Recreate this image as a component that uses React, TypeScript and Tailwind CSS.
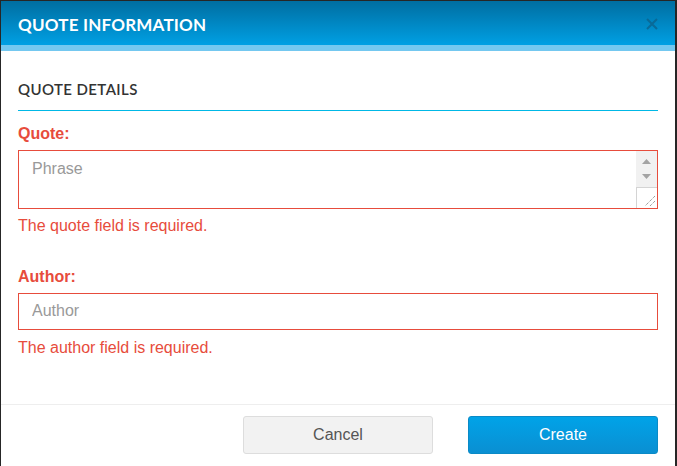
export default function App() {
  return (
    <div className="flex h-[466px] w-[677px] bg-[#262626] pl-px pr-[2px] pt-px">
      <div className="flex flex-1 flex-col bg-white">
        {/* header */}
        <div className="flex h-[44px] items-center justify-between bg-gradient-to-b from-[#006ea1] to-[#00a0e4] pl-[17px] pr-[17px] pt-[4px]">
          <h2 className="font-['Lato',sans-serif] text-[17px] font-bold tracking-[0.2px] text-white">
            QUOTE INFORMATION
          </h2>
          <svg width="12" height="12" viewBox="0 0 12 12" className="-mt-[3px]">
            <path d="M1 1 L11 11 M11 1 L1 11" stroke="#0a6590" strokeWidth="2" strokeOpacity="0.85" />
          </svg>
        </div>
        <div className="h-[6px] bg-[#74c8f0]" />

        {/* body */}
        <div className="flex flex-1 flex-col px-[17px] pt-[27px]">
          <div className="border-b border-[#00b8e6] pb-[9px]">
            <h3 className="font-['Lato',sans-serif] text-[15px] font-semibold tracking-[0.4px] text-[#333]">
              QUOTE DETAILS
            </h3>
          </div>

          <label className="mt-[11px] font-['Liberation_Sans',Arial,sans-serif] text-[16px] font-bold text-[#e74c3c]">
            Quote:
          </label>
          <div className="relative mt-[4px] h-[59px]">
            <textarea
              placeholder="Phrase"
              className="h-full w-full resize-none border border-[#e74c3c] py-[6px] pl-[13px] pr-[26px] font-['Liberation_Sans',Arial,sans-serif] text-[16px] text-[#333] outline-none placeholder:text-[#999]"
            />
            {/* scrollbar drawn over the textarea */}
            <div className="absolute bottom-px right-px top-px flex w-[21px] flex-col">
              <div className="flex flex-1 flex-col items-center justify-center gap-[10px] bg-[#f1f1f1]">
                <svg width="9" height="5" viewBox="0 0 9 5">
                  <path d="M4.5 0 L9 5 L0 5 Z" fill="#a3a3a3" />
                </svg>
                <svg width="9" height="5" viewBox="0 0 9 5">
                  <path d="M0 0 L9 0 L4.5 5 Z" fill="#a3a3a3" />
                </svg>
              </div>
              <div className="relative h-[21px] border-l border-t border-[#d4d4d4] bg-white">
                <svg width="14" height="14" viewBox="0 0 14 14" className="absolute bottom-[1px] right-[1px]">
                  <path d="M13 3 L3 13 M13 8 L8 13" stroke="#777" strokeWidth="1" strokeDasharray="1 1" />
                </svg>
              </div>
            </div>
          </div>
          <p className="mt-[5px] font-['Liberation_Sans',Arial,sans-serif] text-[16px] text-[#e74c3c]">
            The quote field is required.
          </p>

          <label className="mt-[27px] font-['Liberation_Sans',Arial,sans-serif] text-[16px] font-bold text-[#e74c3c]">
            Author:
          </label>
          <input
            placeholder="Author"
            className="mt-[4px] h-[37px] border border-[#e74c3c] px-[13px] font-['Liberation_Sans',Arial,sans-serif] text-[16px] text-[#333] outline-none placeholder:text-[#999]"
          />
          <p className="mt-[6px] font-['Liberation_Sans',Arial,sans-serif] text-[16px] text-[#e74c3c]">
            The author field is required.
          </p>
        </div>

        {/* footer */}
        <div className="flex h-[62px] items-start justify-end gap-[35px] border-t border-[#eee] pr-[17px] pt-[11px]">
          <button className="h-[38px] w-[190px] rounded-[3px] border border-[#ddd] bg-[#f2f2f2] font-['Liberation_Sans',Arial,sans-serif] text-[16px] text-[#555]">
            Cancel
          </button>
          <button className="h-[38px] w-[190px] rounded-[3px] border border-[#0a8ac6] bg-gradient-to-b from-[#00a3e8] to-[#0a8fd2] font-['Liberation_Sans',Arial,sans-serif] text-[16px] text-white">
            Create
          </button>
        </div>
      </div>
    </div>
  );
}
